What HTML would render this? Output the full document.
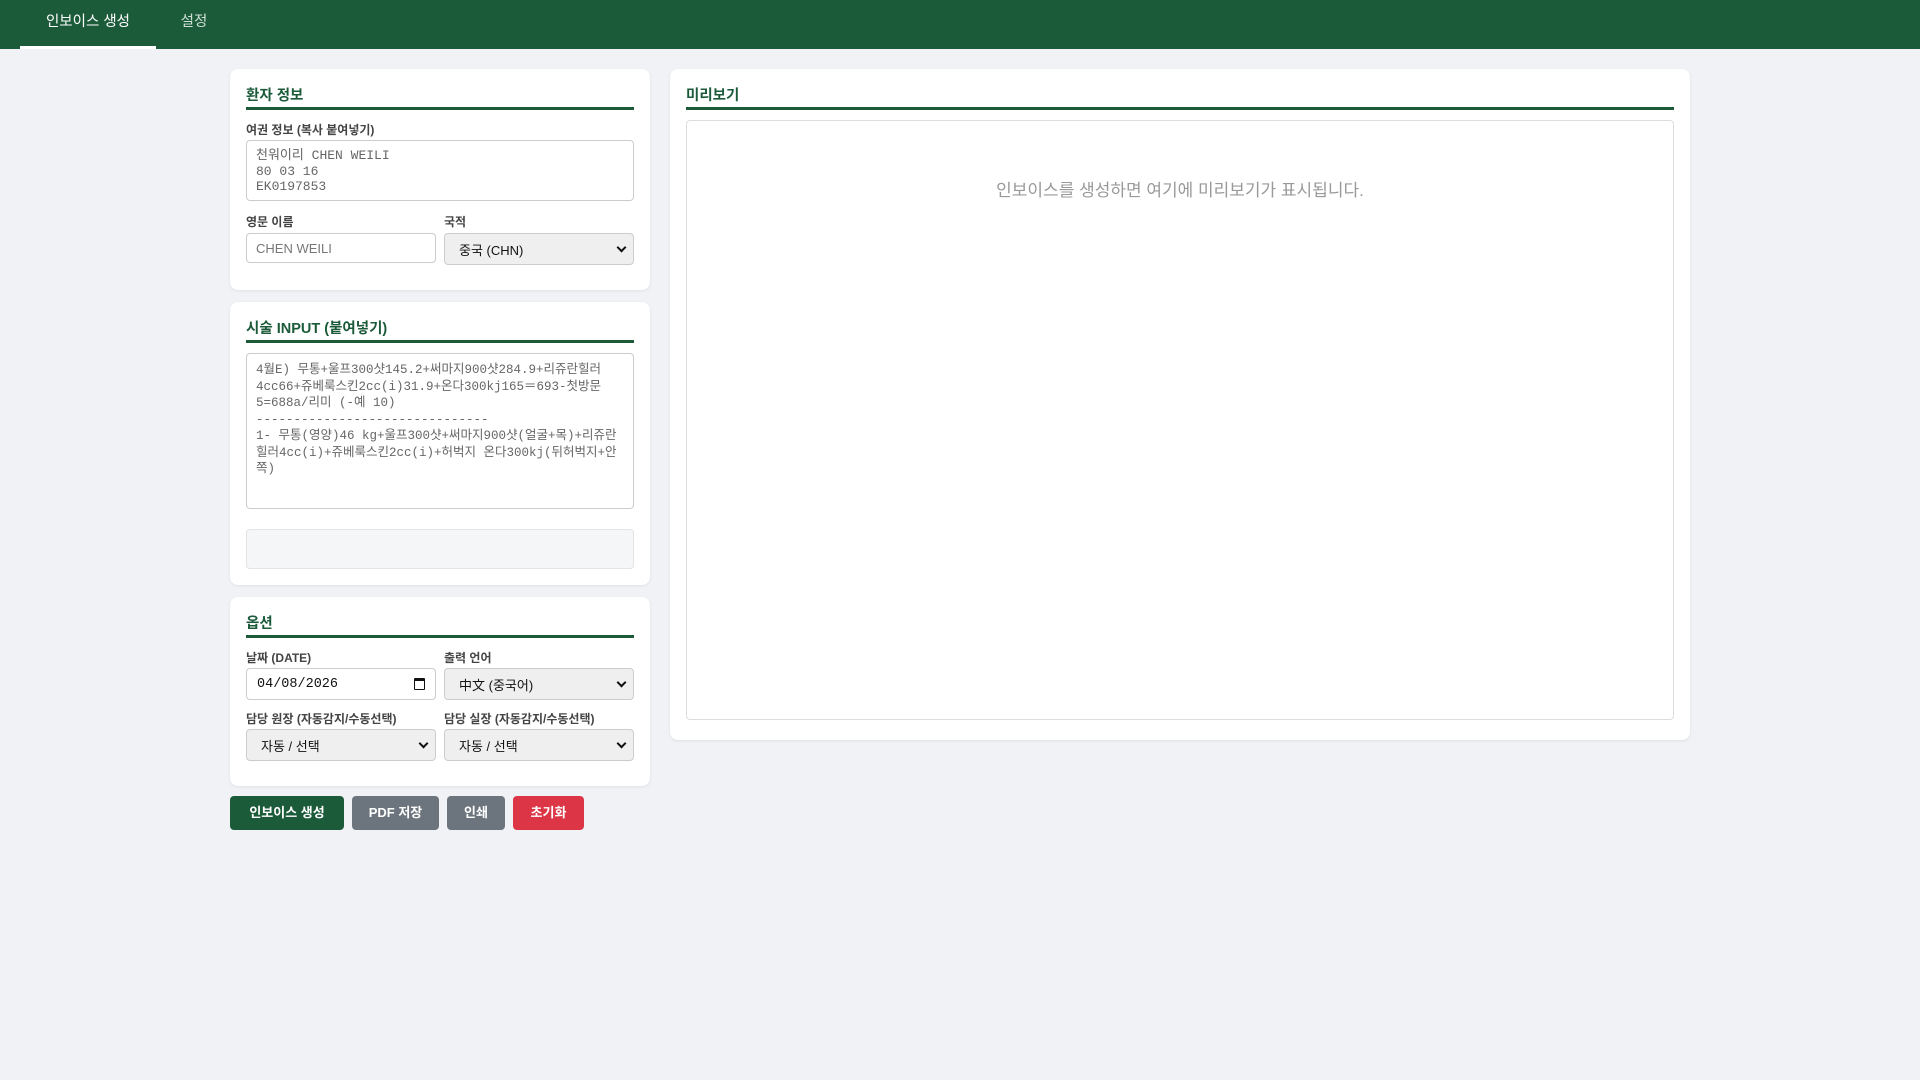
<!DOCTYPE html>
<html><head><meta charset="utf-8"><style>
*{box-sizing:border-box;margin:0;padding:0}
body{width:1920px;height:1080px;background:#f0f2f5;font-family:"Liberation Sans","Noto Sans CJK KR",sans-serif;color:#333;position:relative;overflow:hidden}
.nav{position:absolute;left:0;top:0;width:1920px;height:49px;background:#1c5b3a}
.tab{position:absolute;top:0;height:49px;line-height:45px;font-size:14.5px;color:#cfe0d6;text-align:center}
.tab.a{color:#fff;border-bottom:3px solid #fff}
.card{position:absolute;background:#fff;border-radius:8px;box-shadow:0 1px 3px rgba(0,0,0,.08);padding:0 16px}
.h{font-size:14.5px;font-weight:bold;color:#1c5b3a;padding-top:15px;height:41px;border-bottom:3px solid #1c5b3a}
.lbl{position:absolute;font-size:12px;font-weight:bold;color:#444}
.box{position:absolute;border:1px solid #ccc;border-radius:4px;background:#fff}
.sel{position:absolute;border:1px solid #ccc;border-radius:4px;background:#efefef;font-size:13px;color:#111;padding-left:14px;line-height:31px}
.sel:after{content:"";position:absolute;right:8px;top:10px;width:5px;height:5px;border-right:2px solid #111;border-bottom:2px solid #111;transform:rotate(45deg)}
.mono{font-family:"Liberation Mono","Noto Sans CJK KR",monospace;font-size:12.5px;color:#666;line-height:16.5px;padding:7px 9px;overflow:hidden;white-space:pre-wrap}
.btn{position:absolute;top:796px;height:34px;border-radius:4px;color:#fff;font-size:13px;font-weight:bold;text-align:center;line-height:34px}
</style></head><body>
<div class="nav"><div class="tab a" style="left:20px;width:136px">인보이스 생성</div><div class="tab" style="left:170px;width:48px">설정</div></div>

<div class="card" style="left:230px;top:69px;width:420px;height:221px"><div class="h">환자 정보</div></div>
<div class="lbl" style="left:246px;top:121px">여권 정보 (복사 붙여넣기)</div>
<div class="box mono" style="left:246px;top:140px;width:388px;height:61px;padding-top:7px;line-height:15.5px;font-size:13px">천워이리 CHEN WEILI
80 03 16
EK0197853</div>
<div class="lbl" style="left:246px;top:213px">영문 이름</div>
<div class="box" style="left:246px;top:233px;width:190px;height:30px;font-size:13px;color:#777;padding:7px 9px">CHEN WEILI</div>
<div class="lbl" style="left:444px;top:213px">국적</div>
<div class="sel" style="left:444px;top:233px;width:190px;height:32px;padding-top:1px">중국 (CHN)</div>

<div class="card" style="left:230px;top:302px;width:420px;height:283px"><div class="h">시술 INPUT (붙여넣기)</div></div>
<div class="box mono" style="left:246px;top:353px;width:388px;height:156px;padding-top:8px">4월E) 무통+울프300샷145.2+써마지900샷284.9+리쥬란힐러4cc66+쥬베룩스킨2cc(i)31.9+온다300kj165＝693-첫방문5=688a/리미 (-예 10)
-------------------------------
1- 무통(영양)46 kg+울프300샷+써마지900샷(얼굴+목)+리쥬란힐러4cc(i)+쥬베룩스킨2cc(i)+허벅지 온다300kj(뒤허벅지+안쪽)</div>
<div class="box" style="left:246px;top:529px;width:388px;height:40px;background:#f5f6f8;border-color:#e2e4e8"></div>

<div class="card" style="left:230px;top:597px;width:420px;height:189px"><div class="h">옵션</div></div>
<div class="lbl" style="left:246px;top:649px">날짜 (DATE)</div>
<div class="box" style="left:246px;top:668px;width:190px;height:32px;font-family:'Liberation Mono',monospace;font-size:13.5px;color:#111;padding:8px 10px">04/08/2026<span style="position:absolute;right:10px;top:9px;width:11px;height:12px;border:1.5px solid #111;border-top-width:3px;border-radius:1px"></span></div>
<div class="lbl" style="left:444px;top:649px">출력 언어</div>
<div class="sel" style="left:444px;top:668px;width:190px;height:32px;padding-top:1px">中文 (중국어)</div>
<div class="lbl" style="left:246px;top:710px">담당 원장 (자동감지/수동선택)</div>
<div class="sel" style="left:246px;top:729px;width:190px;height:32px;padding-top:1px">자동 / 선택</div>
<div class="lbl" style="left:444px;top:710px">담당 실장 (자동감지/수동선택)</div>
<div class="sel" style="left:444px;top:729px;width:190px;height:32px;padding-top:1px">자동 / 선택</div>

<div class="btn" style="left:230px;width:114px;background:#1c5b3a">인보이스 생성</div>
<div class="btn" style="left:352px;width:87px;background:#6c757d">PDF 저장</div>
<div class="btn" style="left:447px;width:58px;background:#6c757d">인쇄</div>
<div class="btn" style="left:513px;width:71px;background:#dc3545">초기화</div>

<div class="card" style="left:670px;top:69px;width:1020px;height:671px"><div class="h">미리보기</div></div>
<div class="box" style="left:686px;top:120px;width:988px;height:600px;border-color:#ddd;text-align:center;padding-top:55px;font-size:17px;color:#999">인보이스를 생성하면 여기에 미리보기가 표시됩니다.</div>
</body></html>
